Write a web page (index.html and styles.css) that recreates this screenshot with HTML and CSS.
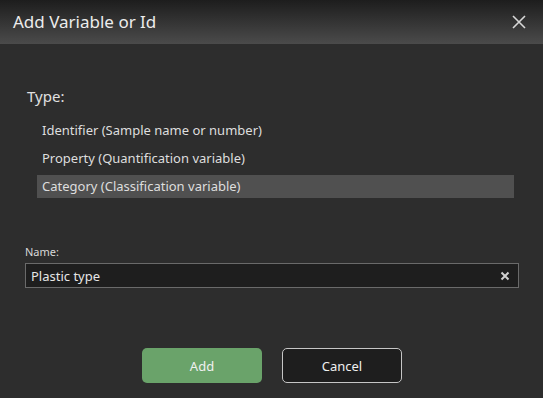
FILE: index.html
```html
<!DOCTYPE html>
<html lang="en">

<head>
  <meta charset="utf8">
  <title>Add Variable or Id</title>
  <link rel="stylesheet" href="styles.css">
</head>

<body>

  <div class="dialog">
    <div class="dialog-header">
      <span class="title">Add Variable or Id</span>
      <button class="close">
        <svg width="14" height="14" viewBox="0 0 14 14">
          <path d="M1 1 L13 13 M13 1 L1 13" stroke="#d8d8d8" stroke-width="1.6"></path>
        </svg>
      </button>
    </div>

    <div class="dialog-body">
      <div class="type-label">Type:</div>
      <ul class="type-list">
        <li>Identifier (Sample name or number)</li>
        <li>Property (Quantification variable)</li>
        <li class="selected">Category (Classification variable)</li>
      </ul>

      <label class="name-label">Name:</label>
      <div class="name-input">
        <input type="text" value="Plastic type">
        <button class="clear">
          <svg width="10" height="10" viewBox="0 0 10 10">
            <path d="M1.5 1.5 L8.5 8.5 M8.5 1.5 L1.5 8.5" stroke="#d0d0d0" stroke-width="2"></path>
          </svg>
        </button>
      </div>

      <div class="actions">
        <button class="btn add">Add</button>
        <button class="btn cancel">Cancel</button>
      </div>
    </div>
  </div>

</body>

</html>
```

FILE: styles.css
```css
* {
  box-sizing: border-box;
}

body {
  margin: 0;
  background-color: #2d2d2d;
  font-family: "Noto Sans", "Open Sans", sans-serif;
  color: #e2e2e2;
}

div.dialog {
  width: 543px;
  height: 398px;
  background-color: #2d2d2d;
  overflow: hidden;
}

div.dialog div.dialog-header {
  display: flex;
  align-items: center;
  justify-content: space-between;
  height: 44px;
  padding-left: 13px;
  padding-right: 17px;
  background: linear-gradient(#1d1d1d, #4b4b4b);
}

div.dialog div.dialog-header span.title {
  font-size: 17px;
  color: #ececec;
  margin-top: -1px;
}

div.dialog button {
  font-family: inherit;
  cursor: pointer;
}

div.dialog div.dialog-header button.close {
  background: transparent;
  border: 0 none;
  padding: 0;
  width: 14px;
  height: 14px;
  display: flex;
}

div.dialog div.dialog-body {
  display: flex;
  flex-direction: column;
  padding: 0 24px 0 25px;
}

div.dialog div.type-label {
  margin-top: 42px;
  margin-left: 2px;
  font-size: 15px;
  line-height: 20px;
  color: #e0e0e0;
}

div.dialog ul.type-list {
  list-style: none;
  margin: 13px 0 0 12px;
  padding: 0;
  width: 477px;
  display: flex;
  flex-direction: column;
  gap: 5px;
}

div.dialog ul.type-list li {
  height: 23px;
  line-height: 23px;
  padding-left: 5px;
  font-size: 13px;
  color: #dedede;
}

div.dialog ul.type-list li.selected {
  background-color: #505050;
}

div.dialog label.name-label {
  margin-top: 46px;
  font-size: 11px;
  line-height: 16px;
  color: #d8d8d8;
}

div.dialog div.name-input {
  display: flex;
  align-items: center;
  margin-top: 3px;
  width: 494px;
  height: 25px;
  background-color: #1e1e1e;
  border: 1px solid #6a6a6a;
}

div.dialog div.name-input input {
  flex-grow: 1;
  background: transparent;
  border: 0 none;
  outline: none;
  padding: 0 0 0 5px;
  font-family: inherit;
  font-size: 13px;
  color: #e6e6e6;
}

div.dialog div.name-input button.clear {
  background: transparent;
  border: 0 none;
  padding: 0;
  width: 10px;
  height: 10px;
  margin-right: 8px;
  display: flex;
}

div.dialog div.actions {
  display: flex;
  justify-content: center;
  column-gap: 20px;
  margin-top: 60px;
}

div.dialog div.actions button.btn {
  width: 120px;
  height: 35px;
  border-radius: 5px;
  font-size: 13px;
  color: #f0f0f0;
}

div.dialog div.actions button.add {
  background-color: #6aa36a;
  border: 0 none;
}

div.dialog div.actions button.cancel {
  background-color: #1e1e1e;
  border: 1px solid #c6c6c6;
}
```
